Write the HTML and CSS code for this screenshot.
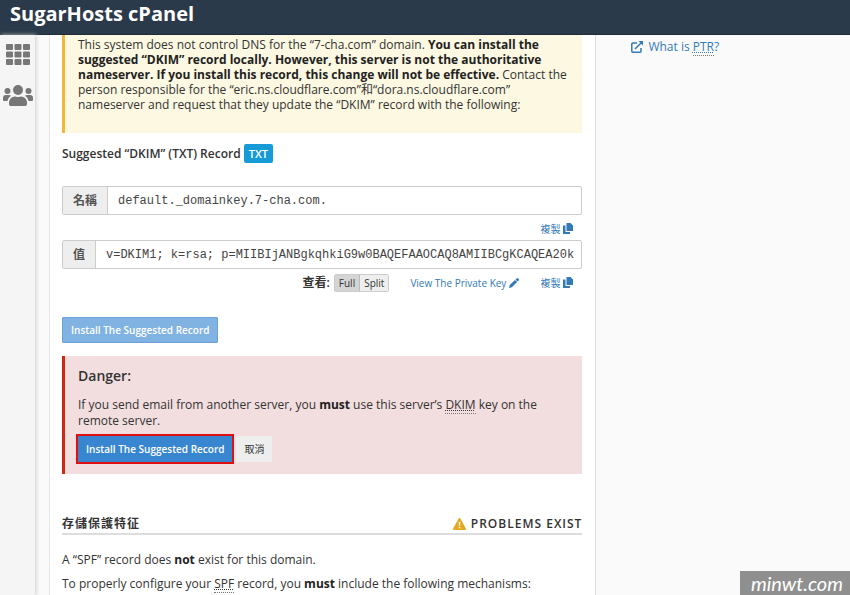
FILE: index.html
```html
<!DOCTYPE html>
<html lang="zh-Hant">
<head>
    <meta charset="UTF-8">
    <meta name="viewport" content="width=device-width, initial-scale=1.0">
    <title>SugarHosts cPanel</title>
    <link rel="stylesheet" href="styles.css">
</head>
<body>
    <header class="topbar">
        <h1>SugarHosts cPanel</h1>
    </header>

    <div class="layout">
        <nav class="sidebar">
            <a href="#" aria-label="Tools">
                <svg width="24" height="21" viewBox="0 0 24 21" fill="#777">
                    <rect x="0" y="0" width="7" height="6" rx="1"/>
                    <rect x="8.5" y="0" width="7" height="6" rx="1"/>
                    <rect x="17" y="0" width="7" height="6" rx="1"/>
                    <rect x="0" y="7.5" width="7" height="6" rx="1"/>
                    <rect x="8.5" y="7.5" width="7" height="6" rx="1"/>
                    <rect x="17" y="7.5" width="7" height="6" rx="1"/>
                    <rect x="0" y="15" width="7" height="6" rx="1"/>
                    <rect x="8.5" y="15" width="7" height="6" rx="1"/>
                    <rect x="17" y="15" width="7" height="6" rx="1"/>
                </svg>
            </a>
            <a href="#" aria-label="Users">
                <svg width="30" height="21" viewBox="0 0 30 21" fill="#777">
                    <circle cx="15" cy="5" r="5"/>
                    <circle cx="4.5" cy="6" r="3"/>
                    <circle cx="25.5" cy="6" r="3"/>
                    <path d="M0 15v-2a3 3 0 0 1 3-3h3a3 3 0 0 1 2 .8A8 8 0 0 0 4.400 16H1a1 1 0 0 1-1-1z"/>
                    <path d="M30 15v-2a3 3 0 0 0-3-3h-3a3 3 0 0 0-2 .8 8 8 0 0 1 3.600 5.200H29a1 1 0 0 0 1-1z"/>
                    <path d="M6 19.200v-1.700a6 6 0 0 1 6-6h.5a6 6 0 0 0 5 0h.5a6 6 0 0 1 6 6v1.700a1.800 1.800 0 0 1-1.800 1.800H7.800A1.800 1.800 0 0 1 6 19.200z"/>
                </svg>
            </a>
        </nav>

        <main class="content">
            <div class="callout warning">
                This system does not control DNS for the “7-cha.com” domain. <strong>You can install the suggested “DKIM” record locally. However, this server is not the authoritative nameserver. If you install this record, this change will not be effective.</strong> Contact the person responsible for the “eric.ns.cloudflare.com”和“dora.ns.cloudflare.com” nameserver and request that they update the “DKIM” record with the following:
            </div>

            <h2 class="record-title">Suggested “DKIM” (TXT) Record <span class="label">TXT</span></h2>

            <div class="input-group">
                <label for="name">名稱</label>
                <input type="text" id="name" value="default._domainkey.7-cha.com." readonly>
            </div>
            <div class="actions">
                <button class="link" type="button">複製
                    <svg width="10" height="11" viewBox="0 0 10 11" fill="#337ab7"><path d="M3.500 0H7.500L10 2.500V8H3.500zM0 2.500H2.500V9H7V11H0z"/></svg>
                </button>
            </div>

            <div class="input-group">
                <label for="value">值</label>
                <input type="text" id="value" value="v=DKIM1; k=rsa; p=MIIBIjANBgkqhkiG9w0BAQEFAAOCAQ8AMIIBCgKCAQEA20k0" readonly>
            </div>
            <div class="actions">
                <div class="view">
                    <span>查看:</span>
                    <div class="btn-group">
                        <button class="active" type="button">Full</button><button type="button">Split</button>
                    </div>
                </div>
                <button class="link" type="button">View The Private Key
                    <svg width="10" height="10" viewBox="0 0 10 10" fill="#337ab7"><path d="M7.600.4a1.200 1.200 0 0 1 1.600 0l.5.500a1.200 1.200 0 0 1 0 1.600l-1.100 1.100L6.500 1.500zM6 2l2.100 2.100L2.900 9.300 0 10l.7-2.900z"/></svg>
                </button>
                <button class="link" type="button">複製
                    <svg width="10" height="11" viewBox="0 0 10 11" fill="#337ab7"><path d="M3.500 0H7.500L10 2.500V8H3.500zM0 2.500H2.500V9H7V11H0z"/></svg>
                </button>
            </div>

            <button class="btn primary install" type="button" disabled>Install The Suggested Record</button>

            <div class="callout danger">
                <h3>Danger:</h3>
                <p>If you send email from another server, you <strong>must</strong> use this server’s <abbr title="DomainKeys Identified Mail">DKIM</abbr> key on the remote server.</p>
                <div class="buttons">
                    <button class="btn primary marked" type="button">Install The Suggested Record</button>
                    <button class="btn cancel" type="button">取消</button>
                </div>
            </div>

            <div class="section-head">
                <h2>存儲保護特征</h2>
                <div class="status">
                    <svg width="13" height="12" viewBox="0 0 13 12"><path d="M6.500 1L12 11H1z" fill="#e5a820" stroke="#e5a820" stroke-width="2" stroke-linejoin="round"/><path d="M6.500 3.800v3.600M6.500 8.800v1.400" stroke="#fff" stroke-width="1.500"/></svg>
                    PROBLEMS EXIST
                </div>
            </div>
            <p class="text">A “SPF” record does <strong>not</strong> exist for this domain.</p>
            <p class="text">To properly configure your <abbr title="Sender Policy Framework">SPF</abbr> record, you <strong>must</strong> include the following mechanisms:</p>
        </main>

        <aside class="help">
            <a href="#">
                <svg width="12" height="12" viewBox="0 0 12 12" fill="none" stroke="#337ab7" stroke-width="1.500"><path d="M6 2H1.800a1 1 0 0 0-1 1v7.200a1 1 0 0 0 1 1H9a1 1 0 0 0 1-1V7M4 8l6.500-6.500"/><path d="M7.500 0H12v4.500z" fill="#337ab7" stroke="none"/></svg>
                <span>What is <abbr title="Pointer record">PTR</abbr>?</span>
            </a>
        </aside>
    </div>

    <div class="watermark">minwt.com</div>
</body>
</html>
```
FILE: styles.css
```css
* {
    box-sizing: border-box;
}
body {
    margin: 0;
    height: 100vh;
    overflow: hidden;
    display: flex;
    flex-direction: column;
    background: #fafafa;
    color: #333;
    font-family: "Open Sans", "Noto Sans CJK TC", sans-serif;
    font-size: 12px;
    line-height: 16px;
}
h1, h2, h3, p {
    margin: 0;
}
button, input {
    font: inherit;
    color: inherit;
}
strong {
    font-weight: 700;
    color: #222;
}
abbr {
    text-decoration: underline dotted;
    border-bottom: 1px dotted #777;
}
svg {
    flex: none;
}

.topbar {
    flex: none;
    height: 35px;
    padding: 0 10px;
    background: #2a3a4a;
    border-bottom: 1px solid #1f2c3a;
}
.topbar h1 {
    color: #fff;
    font-size: 20px;
    font-weight: 700;
    line-height: 27px;
}

.layout {
    flex: 1;
    display: flex;
    min-height: 0;
}
.sidebar {
    flex: none;
    width: 35px;
    margin-right: 14px;
    padding-top: 9px;
    display: flex;
    flex-direction: column;
    align-items: center;
    gap: 20px;
    background: #f5f5f5;
    box-shadow: 1px 0 4px #ccc;
}
.sidebar a {
    display: flex;
}
.content {
    flex: none;
    width: 64.4%;
    padding: 0 13px 0 12px;
    background: #fff;
    border-left: 1px solid #e8e8e8;
    border-right: 1px solid #ddd;
}

.callout {
    padding: 0 12px 12px 13px;
    border-left: 3px solid;
}
.warning {
    padding-top: 2px;
    padding-bottom: 21px;
    background: #fcf8e1;
    border-color: #f0b93a;
    line-height: 15px;
}
.record-title {
    margin: 11px 0 23px;
    font-size: 12px;
    font-weight: 600;
    line-height: 19px;
}
.label {
    display: inline-block;
    padding: 0 5px;
    border-radius: 2px;
    background: #179bd7;
    color: #fff;
    font-size: 11px;
}

.input-group {
    display: flex;
    height: 29px;
    border: 1px solid #ccc;
    border-radius: 2px;
}
.input-group label {
    padding: 0 10px;
    background: #eee;
    border-right: 1px solid #ccc;
    font-weight: 700;
    color: #555;
    line-height: 27px;
}
.input-group input {
    flex: 1;
    min-width: 0;
    margin: 0 7px 0 10px;
    padding: 0;
    border: 0;
    background: none;
    color: #444;
    font-family: "Liberation Mono", monospace;
}
.actions {
    display: flex;
    justify-content: flex-end;
    align-items: center;
    gap: 21px;
    height: 25px;
    padding: 2px 9px 0 0;
}
.link {
    display: flex;
    align-items: center;
    gap: 3px;
    padding: 0;
    border: 0;
    background: none;
    color: #337ab7;
    font-size: 10px;
}
.view {
    display: flex;
    align-items: center;
    gap: 4px;
    font-weight: 600;
}
.btn-group {
    display: flex;
    border: 1px solid #ccc;
    border-radius: 2px;
}
.btn-group button {
    padding: 0 4px;
    border: 0;
    background: #eee;
    font-size: 10px;
    font-weight: 400;
}
.btn-group .active {
    background: #d4d4d4;
    border-right: 1px solid #bbb;
}

.btn {
    height: 26px;
    padding: 0 8px;
    border: 0;
    font-size: 10px;
}
.primary {
    background: #3886cf;
    color: #fff;
    font-weight: 600;
}
.install {
    display: block;
    margin: 23px 0 13px;
    border: 1px solid #6ba1d6;
    border-radius: 1px;
    background: #81b3e2;
}
.danger {
    padding-top: 10px;
    background: #f2dede;
    border-color: #cf2a0f;
}
.danger h3 {
    margin-bottom: 11px;
    font-size: 14px;
    font-weight: 600;
    line-height: 20px;
}
.buttons {
    display: flex;
    gap: 4px;
    margin-top: 7px;
}
.marked {
    outline: 2px solid #e01010;
}
.cancel {
    background: #eee;
}

.section-head {
    display: flex;
    justify-content: space-between;
    align-items: center;
    margin-top: 42px;
    padding-bottom: 1px;
    border-bottom: 2px solid #ddd;
    letter-spacing: 1px;
}
.section-head h2 {
    font-size: 12px;
    font-weight: 700;
}
.status {
    display: flex;
    align-items: center;
    gap: 5px;
    font-weight: 600;
}
.text {
    margin-top: 8px;
}
.section-head + .text {
    margin-top: 17px;
}

.help {
    flex: 1;
    padding: 4px 12px 0 35px;
}
.help a {
    display: flex;
    align-items: center;
    gap: 5px;
    color: #337ab7;
    text-decoration: none;
}

.watermark {
    position: absolute;
    right: 0;
    bottom: 0;
    padding: 0 7px 0 11px;
    background: #8f8f8f;
    color: #fff;
    font-family: Lato, sans-serif;
    font-size: 20px;
    font-style: italic;
    line-height: 24px;
}
```
